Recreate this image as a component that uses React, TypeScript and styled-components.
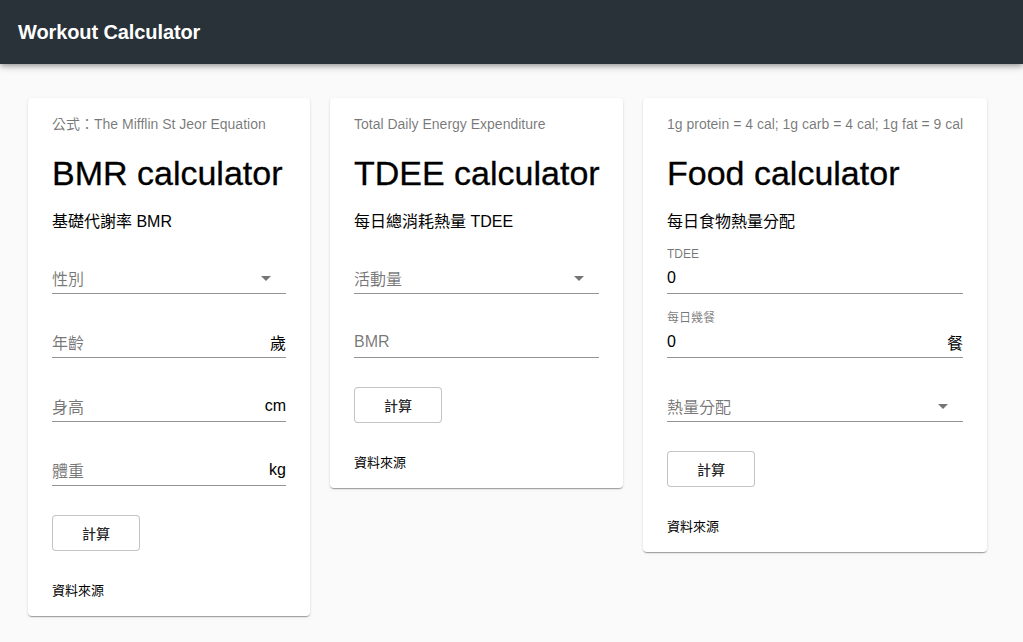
import styled, { createGlobalStyle } from "styled-components";

const GlobalStyle = createGlobalStyle`
  html, body {
    margin: 0;
    padding: 0;
    background: #fafafa;
  }
  body {
    font-family: "Liberation Sans", "Noto Sans CJK TC", sans-serif;
    color: rgba(0, 0, 0, 0.87);
  }
`;

const Page = styled.div`
  min-height: 642px;
  background: #fafafa;
`;

const AppBar = styled.header`
  height: 64px;
  background: #283238;
  display: flex;
  align-items: center;
  padding: 0 18px;
  box-shadow: 0 2px 4px -1px rgba(0, 0, 0, 0.2), 0 4px 5px 0 rgba(0, 0, 0, 0.14),
    0 1px 10px 0 rgba(0, 0, 0, 0.12);
`;

const AppTitle = styled.h1`
  margin: 0;
  color: #fff;
  font-size: 20px;
  font-weight: 700;
  letter-spacing: -0.1px;
`;

const CardRow = styled.main`
  display: flex;
  align-items: flex-start;
  gap: 20px;
  padding: 34px 28px;
`;

const Card = styled.section<{ $width: number }>`
  width: ${(p) => p.$width}px;
  box-sizing: border-box;
  padding: 16px 24px 16px;
  background: #fff;
  border-radius: 4px;
  box-shadow: 0 2px 1px -1px rgba(0, 0, 0, 0.2), 0 1px 1px 0 rgba(0, 0, 0, 0.14),
    0 1px 3px 0 rgba(0, 0, 0, 0.12);
  display: flex;
  flex-direction: column;
`;

const Caption = styled.div`
  font-size: 14px;
  line-height: 20px;
  color: rgba(0, 0, 0, 0.54);
  white-space: nowrap;
`;

const Title = styled.h2`
  margin: 19px 0 0;
  font-size: 34px;
  line-height: 40px;
  font-weight: 400;
  color: #000;
  white-space: nowrap;
  -webkit-text-stroke: 0.3px #000;
`;

const Subtitle = styled.div`
  margin-top: 17px;
  font-size: 16px;
  line-height: 24px;
  color: #000;
`;

const Fields = styled.div`
  display: flex;
  flex-direction: column;
  gap: 16px;
  margin-top: 12px;
`;

const Field = styled.div`
  position: relative;
  height: 48px;
  display: flex;
  flex-direction: column;
  justify-content: flex-end;
`;

const SmallLabel = styled.div`
  position: absolute;
  top: 1px;
  left: 0;
  font-size: 12px;
  line-height: 14px;
  color: rgba(0, 0, 0, 0.54);
`;

const InputLine = styled.div`
  height: 32px;
  box-sizing: border-box;
  border-bottom: 1px solid rgba(0, 0, 0, 0.42);
  display: flex;
  align-items: center;
  padding: 1px 0 0;
  font-size: 16px;
`;

const Placeholder = styled.span`
  flex: 1;
  color: rgba(0, 0, 0, 0.54);
`;

const Value = styled.span`
  flex: 1;
  color: #000;
`;

const Adornment = styled.span`
  color: #000;
`;

const Arrow = styled.span`
  width: 0;
  height: 0;
  margin-right: 15px;
  border-left: 5px solid transparent;
  border-right: 5px solid transparent;
  border-top: 5px solid rgba(0, 0, 0, 0.54);
`;

const Button = styled.button`
  margin-top: 29px;
  align-self: flex-start;
  width: 88px;
  height: 36px;
  background: #fff;
  border: 1px solid rgba(0, 0, 0, 0.23);
  border-radius: 4px;
  font-family: inherit;
  font-size: 14px;
  font-weight: 500;
  color: rgba(0, 0, 0, 0.87);
  cursor: pointer;
`;

const SourceLink = styled.a`
  margin-top: 31px;
  font-size: 13px;
  line-height: 18px;
  color: #000;
  text-decoration: none;
`;

type FieldSpec =
  | { kind: "select"; label: string }
  | { kind: "text"; label: string; unit?: string }
  | { kind: "filled"; label: string; value: string; unit?: string };

const FormField = ({ spec }: { spec: FieldSpec }) => {
  if (spec.kind === "filled") {
    return (
      <Field>
        <SmallLabel>{spec.label}</SmallLabel>
        <InputLine>
          <Value>{spec.value}</Value>
          {spec.unit && <Adornment>{spec.unit}</Adornment>}
        </InputLine>
      </Field>
    );
  }
  return (
    <Field>
      <InputLine>
        <Placeholder>{spec.label}</Placeholder>
        {spec.kind === "select" ? <Arrow /> : spec.unit && <Adornment>{spec.unit}</Adornment>}
      </InputLine>
    </Field>
  );
};

const cards: { width: number; caption: string; title: string; subtitle: string; fields: FieldSpec[] }[] = [
  {
    width: 282,
    caption: "公式：The Mifflin St Jeor Equation",
    title: "BMR calculator",
    subtitle: "基礎代謝率 BMR",
    fields: [
      { kind: "select", label: "性別" },
      { kind: "text", label: "年齡", unit: "歲" },
      { kind: "text", label: "身高", unit: "cm" },
      { kind: "text", label: "體重", unit: "kg" },
    ],
  },
  {
    width: 293,
    caption: "Total Daily Energy Expenditure",
    title: "TDEE calculator",
    subtitle: "每日總消耗熱量 TDEE",
    fields: [
      { kind: "select", label: "活動量" },
      { kind: "text", label: "BMR" },
    ],
  },
  {
    width: 344,
    caption: "1g protein = 4 cal; 1g carb = 4 cal; 1g fat = 9 cal",
    title: "Food calculator",
    subtitle: "每日食物熱量分配",
    fields: [
      { kind: "filled", label: "TDEE", value: "0" },
      { kind: "filled", label: "每日幾餐", value: "0", unit: "餐" },
      { kind: "select", label: "熱量分配" },
    ],
  },
];

const App = () => {
  return (
    <Page>
      <GlobalStyle />
      <AppBar>
        <AppTitle>Workout Calculator</AppTitle>
      </AppBar>
      <CardRow>
        {cards.map((c) => (
          <Card key={c.title} $width={c.width}>
            <Caption>{c.caption}</Caption>
            <Title>{c.title}</Title>
            <Subtitle>{c.subtitle}</Subtitle>
            <Fields>
              {c.fields.map((f) => (
                <FormField key={f.label} spec={f} />
              ))}
            </Fields>
            <Button>計算</Button>
            <SourceLink href="#">資料來源</SourceLink>
          </Card>
        ))}
      </CardRow>
    </Page>
  );
};

export default App;
